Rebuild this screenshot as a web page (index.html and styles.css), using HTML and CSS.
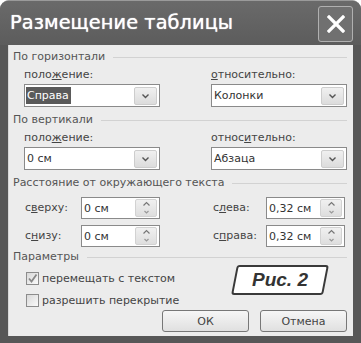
FILE: index.html
```html
<!DOCTYPE html>
<html lang="ru">
<head>
<meta charset="utf-8">
<link rel="stylesheet" href="styles.css">
</head>
<body>
<div class="window">
  <div class="titlebar">
    <span class="title">Размещение таблицы</span>
    <div class="close">
      <svg width="18" height="18" viewBox="0 0 18 18"><path d="M2 2 L16 16 M16 2 L2 16" stroke="#fff" stroke-width="3.2" stroke-linecap="square"/></svg>
    </div>
  </div>
  <div class="content">
    <div class="group-head"><span>По горизонтали</span><i class="rule"></i></div>
    <div class="pair">
      <div class="field">
        <div class="lbl">поло<u>ж</u>ение:</div>
        <div class="select"><span class="val sel">Справа</span><span class="drop"><svg width="9" height="6" viewBox="0 0 9 6"><path d="M1.5 1.5 L4.5 4.5 L7.5 1.5" stroke="#555" stroke-width="1.4" fill="none"/></svg></span></div>
      </div>
      <div class="field">
        <div class="lbl"><u>о</u>тносительно:</div>
        <div class="select"><span class="val">Колонки</span><span class="drop"><svg width="9" height="6" viewBox="0 0 9 6"><path d="M1.5 1.5 L4.5 4.5 L7.5 1.5" stroke="#555" stroke-width="1.4" fill="none"/></svg></span></div>
      </div>
    </div>
    <div class="group-head g2"><span>По вертикали</span><i class="rule"></i></div>
    <div class="pair p2">
      <div class="field">
        <div class="lbl">поло<u>ж</u>ение:</div>
        <div class="select"><span class="val">0 см</span><span class="drop"><svg width="9" height="6" viewBox="0 0 9 6"><path d="M1.5 1.5 L4.5 4.5 L7.5 1.5" stroke="#555" stroke-width="1.4" fill="none"/></svg></span></div>
      </div>
      <div class="field">
        <div class="lbl">относ<u>и</u>тельно:</div>
        <div class="select"><span class="val">Абзаца</span><span class="drop"><svg width="9" height="6" viewBox="0 0 9 6"><path d="M1.5 1.5 L4.5 4.5 L7.5 1.5" stroke="#555" stroke-width="1.4" fill="none"/></svg></span></div>
      </div>
    </div>
    <div class="group-head g3"><span>Расстояние от окружающего текста</span><i class="rule"></i></div>
    <div class="dist">
      <div class="dl c1">с<u>в</u>ерху:</div>
      <div class="spin c2"><span class="val">0 см</span><span class="arrows"><svg width="9" height="16" viewBox="0 0 9 16"><path d="M1.5 5.5 L4.5 2.5 L7.5 5.5" stroke="#777" stroke-width="1.2" fill="none"/><path d="M2.5 11 L4.5 13 L6.5 11" stroke="#999" stroke-width="1.2" fill="none"/></svg></span></div>
      <div class="dl c4">с<u>л</u>ева:</div>
      <div class="spin c5"><span class="val">0,32 см</span><span class="arrows"><svg width="9" height="16" viewBox="0 0 9 16"><path d="M1.5 5.5 L4.5 2.5 L7.5 5.5" stroke="#777" stroke-width="1.2" fill="none"/><path d="M2.5 11 L4.5 13 L6.5 11" stroke="#999" stroke-width="1.2" fill="none"/></svg></span></div>
      <div class="dl c1">с<u>н</u>изу:</div>
      <div class="spin c2"><span class="val">0 см</span><span class="arrows"><svg width="9" height="16" viewBox="0 0 9 16"><path d="M1.5 5.5 L4.5 2.5 L7.5 5.5" stroke="#777" stroke-width="1.2" fill="none"/><path d="M2.5 11 L4.5 13 L6.5 11" stroke="#999" stroke-width="1.2" fill="none"/></svg></span></div>
      <div class="dl c4">с<u>п</u>рава:</div>
      <div class="spin c5"><span class="val">0,32 см</span><span class="arrows"><svg width="9" height="16" viewBox="0 0 9 16"><path d="M1.5 5.5 L4.5 2.5 L7.5 5.5" stroke="#777" stroke-width="1.2" fill="none"/><path d="M2.5 11 L4.5 13 L6.5 11" stroke="#999" stroke-width="1.2" fill="none"/></svg></span></div>
    </div>
    <div class="group-head g4"><span>Параметры</span><i class="rule"></i></div>
    <div class="params">
      <div class="checks">
        <div class="chk"><span class="box"><svg width="11" height="11" viewBox="0 0 11 11"><path d="M2 5.5 L4.5 8.5 L9.5 1.5" stroke="#888" stroke-width="1.8" fill="none"/></svg></span><span>перемещать с текстом</span></div>
        <div class="chk"><span class="box"></span><span>разрешить перекрытие</span></div>
      </div>
      <div class="fig"><span class="fig-shape"></span><span class="fig-text">Рис. 2</span></div>
    </div>
    <div class="buttons">
      <div class="btn">ОК</div>
      <div class="btn">Отмена</div>
    </div>
  </div>
</div>
</body>
</html>
```
FILE: styles.css
```css
html, body {
  margin: 0;
  padding: 0;
  background: #ffffff;
}
.window {
  width: 361px;
  height: 343px;
  background: #575757;
  border-radius: 9px 9px 0 0;
  box-sizing: border-box;
  border-top: 1px solid #9a9a9a;
  display: flex;
  flex-direction: column;
  font-family: "DejaVu Sans", sans-serif;
  font-size: 11px;
  color: #3a3a3a;
  overflow: hidden;
}
.titlebar {
  height: 44px;
  flex: none;
  display: flex;
  align-items: flex-start;
  justify-content: space-between;
  background: linear-gradient(#6a6a6a, #5c5c5c);
  border-radius: 8px 8px 0 0;
}
.title {
  margin: 9px 0 0 10px;
  color: #ffffff;
  font-family: "DejaVu Sans", sans-serif;
  font-size: 19.3px;
  line-height: 26px;
  letter-spacing: 0.1px;
  text-shadow: 0 0 1px #fff;
}
.close {
  margin: 5px 8px 0 0;
  width: 35px;
  height: 36px;
  box-sizing: border-box;
  border: 1px solid #b0b0b0;
  border-radius: 3px;
  background: #707070;
  display: flex;
  align-items: center;
  justify-content: center;
}
.content {
  margin: 0 8px;
  height: 291px;
  flex: none;
  background: #ececec;
  padding: 5px 6px 0 4px;
  box-sizing: border-box;
  border-left: 1px solid #d8d8d8;
}
.group-head {
  display: flex;
  align-items: center;
  height: 14px;
  line-height: 14px;
  color: #555;
}
.group-head .rule {
  flex: 1;
  height: 1px;
  background: #d2d2d2;
  margin-left: 8px;
}
.g2 { margin-top: 6px; }
.g3 { margin-top: 6px; }
.g4 { margin-top: 3px; }
.pair {
  display: grid;
  grid-template-columns: 136px 136px;
  column-gap: 51px;
  padding-left: 11px;
  margin-top: 4px;
}
.lbl {
  height: 14px;
  line-height: 14px;
  color: #444;
}
.select {
  margin-top: 2px;
  height: 23px;
  box-sizing: border-box;
  border: 1px solid #8a8a8a;
  background: #fff;
  display: flex;
  align-items: center;
  justify-content: space-between;
  padding: 0 2px 0 1px;
}
.val {
  line-height: 17px;
  padding: 0 1px;
  color: #333;
}
.val.sel {
  background: #5a5a5a;
  color: #fff;
  padding: 0 2px 0 1px;
}
.drop {
  width: 23px;
  height: 18px;
  box-sizing: border-box;
  border: 1px solid #cdcdcd;
  border-radius: 2px;
  background: linear-gradient(#f0f0f0, #dcdcdc);
  display: flex;
  align-items: center;
  justify-content: center;
}
.dist {
  display: grid;
  grid-template-columns: 56px 79px 51px 55px 79px;
  row-gap: 6px;
  padding-left: 12px;
  margin-top: 7px;
}
.c1 { grid-column: 1; }
.c2 { grid-column: 2; }
.c4 { grid-column: 4; padding-left: 2px; }
.c5 { grid-column: 5; }
.dl {
  line-height: 22px;
  color: #444;
}
.spin {
  height: 22px;
  box-sizing: border-box;
  border: 1px solid #8a8a8a;
  background: #fff;
  display: flex;
  align-items: center;
  justify-content: space-between;
  padding: 0 2px 0 1px;
}
.arrows {
  width: 22px;
  height: 18px;
  box-sizing: border-box;
  border: 1px solid #d2d2d2;
  border-radius: 2px;
  background: linear-gradient(#f0f0f0, #dedede);
  display: flex;
  align-items: center;
  justify-content: center;
}
.params {
  display: flex;
  margin-top: 7px;
  padding-left: 13px;
  height: 36px;
}
.checks {
  display: flex;
  flex-direction: column;
  gap: 8px;
  width: 188px;
}
.chk {
  display: flex;
  align-items: center;
  gap: 3px;
  height: 14px;
  color: #444;
}
.box {
  width: 13px;
  height: 13px;
  box-sizing: border-box;
  border: 1px solid #8c8c8c;
  background: linear-gradient(135deg, #d8d8d8, #fafafa);
  display: flex;
  align-items: center;
  justify-content: center;
}
.fig {
  position: relative;
  width: 92px;
  height: 30px;
  margin-left: 20px;
  margin-top: -6px;
  display: flex;
  align-items: center;
  justify-content: center;
}
.fig-shape {
  position: absolute;
  inset: 0;
  border: 2px solid #3a3a3a;
  border-radius: 3px;
  background: #fff;
  transform: skewX(-11deg);
}
.fig-text {
  position: relative;
  font-family: "Liberation Sans", Arial, sans-serif;
  font-weight: bold;
  font-style: italic;
  font-size: 19px;
  color: #333;
}
.buttons {
  display: flex;
  justify-content: flex-end;
  gap: 11px;
  margin-top: 3px;
}
.btn {
  width: 87px;
  height: 22px;
  box-sizing: border-box;
  border: 1px solid #777;
  border-radius: 3px;
  background: linear-gradient(#f6f6f6, #e0e0e0);
  display: flex;
  align-items: center;
  justify-content: center;
  color: #444;
}
```
